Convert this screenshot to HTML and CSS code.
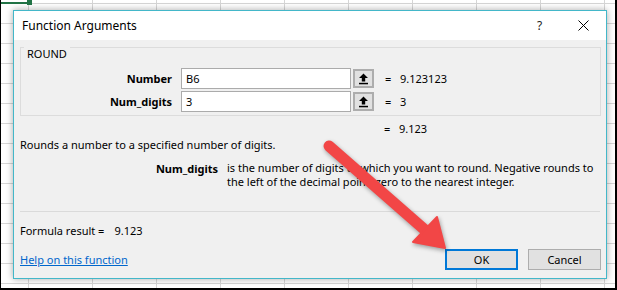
FILE: index.html
```html
<!DOCTYPE html>
<html lang="en">
<head>
    <meta charset="UTF-8" />
    <title>Function Arguments</title>
    <link rel="stylesheet" href="styles.css">
</head>
<body>

<div class="sheet">
    <div class="sel-line"></div>
    <div class="sel-handle"></div>

    <div class="dialog">
        <div class="titlebar">
            <span class="title">Function Arguments</span>
            <span class="tb-help">?</span>
            <svg class="tb-close" width="11" height="11" viewBox="0 0 11 11">
                <path d="M0.5 0.5 L10.5 10.5 M10.5 0.5 L0.5 10.5" stroke="#000" stroke-width="1" fill="none"/>
            </svg>
        </div>

        <div class="content">
            <fieldset class="group">
                <legend>ROUND</legend>

                <div class="arg">
                    <b class="arg-name">Number</b>
                    <div class="arg-input">B6</div>
                    <div class="collapse">
                        <svg width="11" height="12" viewBox="0 0 11 12">
                            <path d="M5.5 0.5 L1 5 H3.8 V8.5 H7.2 V5 H10 Z" fill="#000"/>
                            <rect x="1" y="9.8" width="9" height="1.5" fill="#000"/>
                        </svg>
                    </div>
                    <span class="eq">=</span>
                    <span class="arg-val">9.123123</span>
                </div>

                <div class="arg">
                    <b class="arg-name">Num_digits</b>
                    <div class="arg-input">3</div>
                    <div class="collapse">
                        <svg width="11" height="12" viewBox="0 0 11 12">
                            <path d="M5.5 0.5 L1 5 H3.8 V8.5 H7.2 V5 H10 Z" fill="#000"/>
                            <rect x="1" y="9.8" width="9" height="1.5" fill="#000"/>
                        </svg>
                    </div>
                    <span class="eq">=</span>
                    <span class="arg-val">3</span>
                </div>
            </fieldset>

            <div class="fn-result"><span class="eq">=</span><span>9.123</span></div>

            <p class="fn-desc">Rounds a number to a specified number of digits.</p>

            <div class="arg-help">
                <b>Num_digits</b>
                <p>is the number of digits to which you want to round. Negative rounds to the left of the decimal point; zero to the nearest integer.</p>
            </div>

            <hr class="sep">

            <div class="formula">Formula result =<span>9.123</span></div>

            <div class="footer">
                <a href="#" class="help">Help on this function</a>
                <button class="btn btn-ok">OK</button>
                <button class="btn">Cancel</button>
            </div>
        </div>
    </div>

    <svg class="pointer" width="617" height="290" viewBox="0 0 617 290">
        <g fill="#f24646" stroke="#f24646">
            <line x1="328" y1="146" x2="424" y2="230" stroke-width="11" stroke-linecap="round"/>
            <polygon points="444,248 412,242 436,217" stroke-width="2" stroke-linejoin="round"/>
        </g>
    </svg>
</div>

</body>
</html>
```

FILE: styles.css
```css
*{ box-sizing:border-box; }
body{ margin:0; font-family:"Noto Sans", "Open Sans", sans-serif; font-size:11px; color:#000; }

.sheet{
    position:relative; width:617px; height:290px; overflow:hidden;
    border-left:1px solid #000; border-right:2px solid #000; border-bottom:2px solid #000;
    padding:10px 0 0 12px;
    background-color:#fff;
    background-image:
        repeating-linear-gradient(90deg, transparent 0 27px, #d6d6d6 27px 28px, transparent 28px 64px),
        repeating-linear-gradient(180deg, transparent 0 3px, #d6d6d6 3px 4px, transparent 4px 20px);
}
.sel-line{ position:absolute; left:0; top:2px; width:28px; height:2px; background:#217346; }
.sel-handle{ position:absolute; left:26px; top:0; width:5px; height:5px; background:#217346; }

.dialog{
    width:594px; height:269px; background:#f0f0f0;
    border:1px solid #43b7c9;
    box-shadow:0 0 7px rgba(0,0,0,0.35);
    display:flex; flex-direction:column;
}
.titlebar{ flex:none; height:29px; background:#fff; display:flex; align-items:center; padding-left:8px; }
.title{ flex:1; font-size:12px; }
.tb-help{ width:14px; margin-right:27px; font-size:12px; color:#222; }
.tb-close{ margin-right:17px; }

.content{ padding:0 5px 0 6px; flex:1; display:flex; flex-direction:column; }

.group{ flex:none; margin:-7px 0 0 0; border:1px solid #dcdcdc; padding:0 0 3px 0; }
.group legend{ padding:14px 3px 0; margin-left:3px; line-height:14px; }

.arg{ display:flex; align-items:center; height:21px; margin-top:2px; }
.arg:first-of-type{ margin-top:7px; }
.arg-name{ width:151px; text-align:right; font-weight:bold; }
.arg-input{
    margin-left:9px; width:170px; height:21px; background:#fff;
    border:1px solid #ababab; padding:2px 4px; line-height:15px;
}
.collapse{
    margin-left:2px; width:21px; height:19px; border:2px solid #adadad; background:#e1e1e1;
    display:flex; align-items:center; justify-content:center;
}
.eq{ margin-left:11px; width:15px; }

.fn-result{ height:16px; line-height:16px; margin-top:5px; padding-left:353px; display:flex; }
.fn-desc{ margin:0; height:16px; line-height:16px; }

.arg-help{ display:flex; margin-top:8px; }
.arg-help b{ width:198px; text-align:right; }
.arg-help p{ margin:0 0 0 9px; width:372px; line-height:14px; }

.sep{ margin:22px 0 0 0; width:580px; border:none; border-top:1px solid #dadada; height:0; }

.formula{ margin-top:11px; height:16px; line-height:16px; }
.formula span{ margin-left:10px; }

.footer{ margin-top:10px; display:flex; align-items:center; }
.help{ flex:1; color:#0066cc; text-decoration:underline; }
.btn{
    font-family:inherit; font-size:11px; color:#000;
    width:73px; height:21px; padding:0; background:#e1e1e1; border:1px solid #adadad;
}
.btn-ok{ margin-right:10px; border:2px solid #0078d7; }

.pointer{ position:absolute; left:0; top:0; filter:drop-shadow(1px 2px 2px rgba(0,0,0,0.35)); }
```
